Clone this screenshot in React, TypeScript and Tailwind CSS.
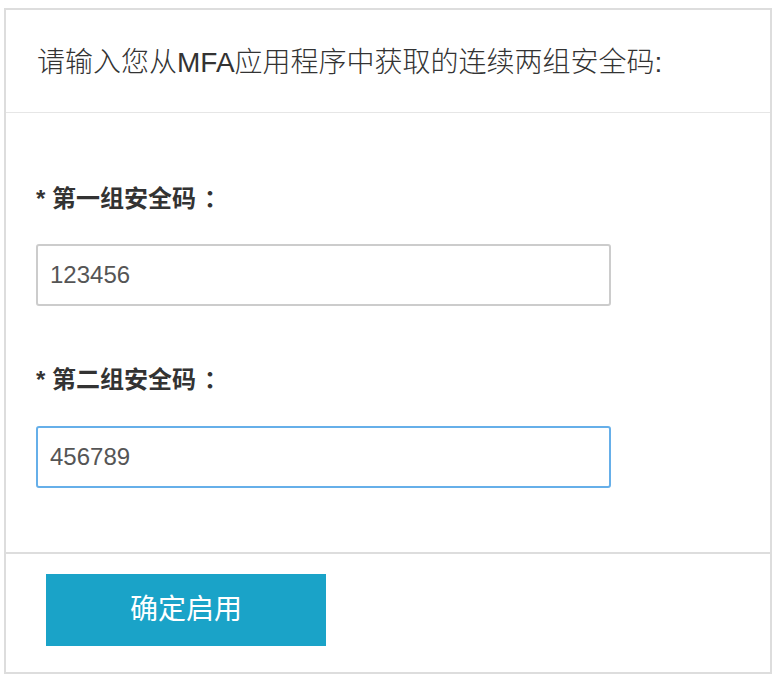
import React, { useState } from 'react';

const font = { fontFamily: '"Liberation Sans", "Noto Sans CJK SC", sans-serif' };

const App = () => {
  const [first, setFirst] = useState('123456');
  const [second, setSecond] = useState('456789');

  return (
    <div className="min-h-[682px] w-[778px] bg-white pt-[8px] pl-[4px]" style={font}>
      <div className="w-[768px] border-2 border-[#dddddd] bg-white">
        {/* header */}
        <div className="flex h-[103px] items-center border-b border-[#e6e6e6] pt-[3px] pl-[31px]">
          <h3 className="text-[28px] font-light leading-none text-[#333333]">
            请输入您从MFA应用程序中获取的连续两组安全码:
          </h3>
        </div>

        {/* body */}
        <div className="px-[30px] pt-[70px] pb-[64px]">
          <label className="block text-[24px] font-bold leading-[32px] text-[#333333]">
            * 第一组安全码<span className="ml-[8px]">：</span>
          </label>
          <input
            value={first}
            onChange={(e) => setFirst(e.target.value)}
            className="mt-[29px] block h-[62px] w-[575px] rounded-[3px] border-2 border-[#cccccc] px-[12px] text-[24px] text-[#555555] outline-none"
          />

          <label className="mt-[58px] block text-[24px] font-bold leading-[32px] text-[#333333]">
            * 第二组安全码<span className="ml-[8px]">：</span>
          </label>
          <input
            value={second}
            onChange={(e) => setSecond(e.target.value)}
            className="mt-[30px] block h-[62px] w-[575px] rounded-[3px] border-2 border-[#66afe9] px-[12px] text-[24px] text-[#555555] outline-none"
          />
        </div>

        {/* footer */}
        <div className="border-t-2 border-[#dddddd] pt-[20px] pb-[26px] pl-[40px]">
          <button className="h-[72px] w-[280px] bg-[#1aa3c8] text-[28px] text-white">
            确定启用
          </button>
        </div>
      </div>
    </div>
  );
};

export default App;
